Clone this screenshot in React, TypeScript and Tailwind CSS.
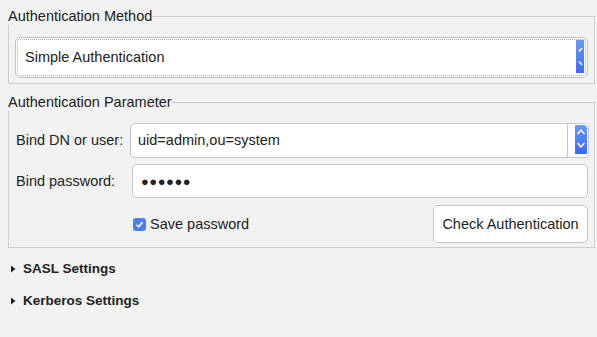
import React from 'react';

const Frame = ({title, className, children}: {title: string; className?: string; children: React.ReactNode}) => (
    <div className={'ml-2 mr-[2px] flex flex-col ' + (className || '')}>
        <div className="flex h-[18px]">
            <span className="leading-[18px] text-[#202020]">{title}</span>
            <div className="flex-1 mt-[9px] border-t border-r border-[#cdcdcd]"/>
        </div>
        <div className="border-l border-r border-b border-[#cdcdcd]">{children}</div>
    </div>
);

const Collapsed = ({label}: {label: string}) => (
    <div className="flex h-[32px] items-center pl-[11px]">
        <svg width="5" height="8" viewBox="0 0 5 8" className="mr-[7px]">
            <path d="M0 0.5 L4.5 4 L0 7.5 Z" fill="#222"/>
        </svg>
        <span className="text-[13.5px] font-bold text-[#222]">{label}</span>
    </div>
);

export default function App() {
    return (
        <div className="w-[597px] h-[337px] bg-[#f2f2f2] overflow-hidden font-['Liberation_Sans',Arial,sans-serif] text-[14.5px] text-[#222]">
            <Frame title="Authentication Method" className="pt-[7px]">
                <div className="pt-[12px] pb-[5px] pl-[6px] pr-[6px]">
                    <div className="h-[41px] bg-white border border-[#c3c3c3] rounded-[5px] p-[1px]">
                        <div className="h-full flex items-center border border-dotted border-[#a9a9a9] rounded-[3px] pl-[7px] pr-[1px]">
                            <span className="flex-1 pt-[1px]">Simple Authentication</span>
                            <div className="w-[8px] h-[33px] self-start bg-gradient-to-b from-[#6b98ff] to-[#3a68fb] flex items-center">
                                <svg width="8" height="33" viewBox="0 0 8 33">
                                    <path d="M6 8 L3 11.5 M3 21.5 L6 25" stroke="#fff" strokeWidth="1.6" fill="none"/>
                                </svg>
                            </div>
                        </div>
                    </div>
                </div>
            </Frame>

            <Frame title="Authentication Parameter" className="mt-[9px]">
                <div className="pt-[12px] pb-[4px] pl-[7px] pr-[6px]">
                    <div className="flex items-center h-[35px]">
                        <span className="w-[114px] pt-[1px]">Bind DN or user:</span>
                        <div className="flex-1 h-full flex bg-white border border-[#c6c6c6] rounded-[5px] mr-[-1px]">
                            <div className="flex-1 flex items-center pl-[7px] pt-[1px] border-r border-[#c6c6c6]">uid=admin,ou=system</div>
                            <div className="w-[20px] pl-[7px] pt-[1px]">
                                <div className="w-[12px] h-[29px] bg-gradient-to-b from-[#6b98ff] to-[#3a68fb] rounded-tr-[4px] flex items-center justify-center">
                                    <svg width="12" height="29" viewBox="0 0 12 29">
                                        <path d="M2.5 9 L6 5 L9.5 9 M2.5 18 L6 22 L9.5 18" stroke="#fff" strokeWidth="1.4" fill="none"/>
                                    </svg>
                                </div>
                            </div>
                        </div>
                    </div>
                    <div className="flex items-center h-[34px] mt-[6px]">
                        <span className="w-[116px] pt-[1px]">Bind password:</span>
                        <div className="flex-1 h-full flex items-center bg-white border border-[#c6c6c6] rounded-[5px] pl-[8px] pt-[1px] tracking-[0.5px] text-[13px]">
                            ●●●●●●
                        </div>
                    </div>
                    <div className="flex items-center h-[38px] mt-[7px]">
                        <label className="flex items-center ml-[117px] flex-1 pt-[1px]">
                            <span className="w-[13px] h-[13px] rounded-[3px] bg-[#4d7ff2] flex items-center justify-center mr-[4px]">
                                <svg width="9" height="9" viewBox="0 0 9 9">
                                    <path d="M1.5 4.8 L3.6 6.8 L7.5 2.2" stroke="#fff" strokeWidth="1.5" fill="none"/>
                                </svg>
                            </span>
                            Save password
                        </label>
                        <button className="w-[155px] h-[38px] bg-white border border-[#c6c6c6] rounded-[5px] pt-[2px] text-[#222]">
                            Check Authentication
                        </button>
                    </div>
                </div>
            </Frame>

            <div className="mt-[5px]">
                <Collapsed label="SASL Settings"/>
                <Collapsed label="Kerberos Settings"/>
            </div>
        </div>
    );
}
